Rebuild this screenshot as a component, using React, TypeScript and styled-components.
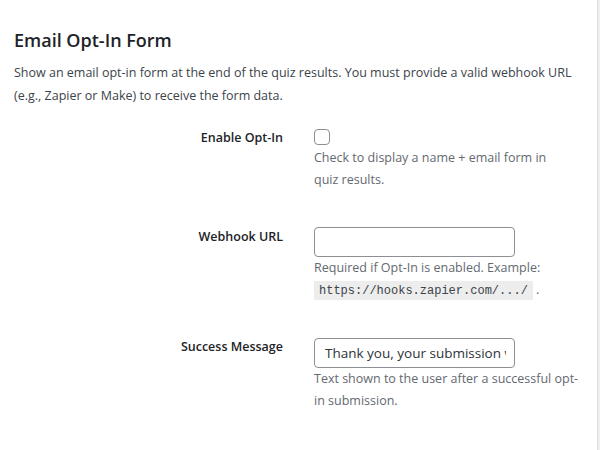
import React from "react";
import styled, { createGlobalStyle } from "styled-components";

const Global = createGlobalStyle`
  html, body { margin: 0; padding: 0; background: #f0f0f1; }
  body { font-family: "Open Sans", "Noto Sans", sans-serif; }
`;

const Panel = styled.div`
  box-sizing: border-box;
  width: 598px;
  height: 450px;
  background: #ffffff;
  border-right: 1px solid #dcdcde;
  padding: 29px 0 0 14px;
`;

const Title = styled.h2`
  margin: 0;
  font-size: 18px;
  line-height: 22px;
  font-weight: 600;
  color: #1d2327;
`;

const Intro = styled.p`
  margin: 10px 0 0;
  width: 572px;
  font-size: 12.5px;
  line-height: 23px;
  color: #3c434a;
`;

const Form = styled.div`
  display: flex;
  flex-direction: column;
  gap: 36px;
  margin-top: 22px;
`;

const Row = styled.div`
  display: grid;
  grid-template-columns: 269px 280px;
  column-gap: 31px;
  align-items: start;
`;

const Label = styled.label<{ $top: number }>`
  text-align: right;
  font-size: 12.5px;
  font-weight: 600;
  line-height: 18px;
  color: #1d2327;
  padding-top: ${(p) => p.$top}px;
`;

const Field = styled.div`
  display: flex;
  flex-direction: column;
  align-items: flex-start;
`;

const Checkbox = styled.span`
  box-sizing: border-box;
  display: block;
  width: 16px;
  height: 16px;
  border: 1px solid #8c8f94;
  border-radius: 4px;
  background: #fff;
  margin-bottom: 2px;
`;

const Input = styled.input`
  box-sizing: border-box;
  width: 201px;
  height: 30px;
  border: 1px solid #8c8f94;
  border-radius: 4px;
  padding: 0 8px 0 10px;
  font-family: "Open Sans", "Noto Sans", sans-serif;
  font-size: 13.5px;
  color: #2c3338;
  background: #fff;
  outline: none;
`;

const Desc = styled.p<{ $w?: number }>`
  margin: 0;
  max-width: ${(p) => (p.$w ? `${p.$w}px` : "none")};
  font-size: 12.5px;
  line-height: 22px;
  color: #646970;
`;

const Code = styled.code`
  font-family: "Liberation Mono", "DejaVu Sans Mono", monospace;
  font-size: 12px;
  background: #ededed;
  color: #3c434a;
  padding: 3px 5px 2px;
`;

export default function App() {
  return (
    <>
      <Global />
      <Panel>
        <Title>Email Opt-In Form</Title>
        <Intro>
          Show an email opt-in form at the end of the quiz results. You must provide a valid webhook URL (e.g., Zapier or Make) to receive the form data.
        </Intro>
        <Form>
          <Row>
            <Label $top={0}>Enable Opt-In</Label>
            <Field>
              <Checkbox />
              <Desc $w={240}>Check to display a name + email form in quiz results.</Desc>
            </Field>
          </Row>
          <Row>
            <Label $top={1}>Webhook URL</Label>
            <Field>
              <Input type="text" defaultValue="" />
              <Desc $w={240}>
                Required if Opt-In is enabled. Example: <Code>https://hooks.zapier.com/.../</Code> .
              </Desc>
            </Field>
          </Row>
          <Row>
            <Label $top={0}>Success Message</Label>
            <Field>
              <Input type="text" defaultValue="Thank you, your submission was received!" />
              <Desc $w={272}>Text shown to the user after a successful opt-in submission.</Desc>
            </Field>
          </Row>
        </Form>
      </Panel>
    </>
  );
}
